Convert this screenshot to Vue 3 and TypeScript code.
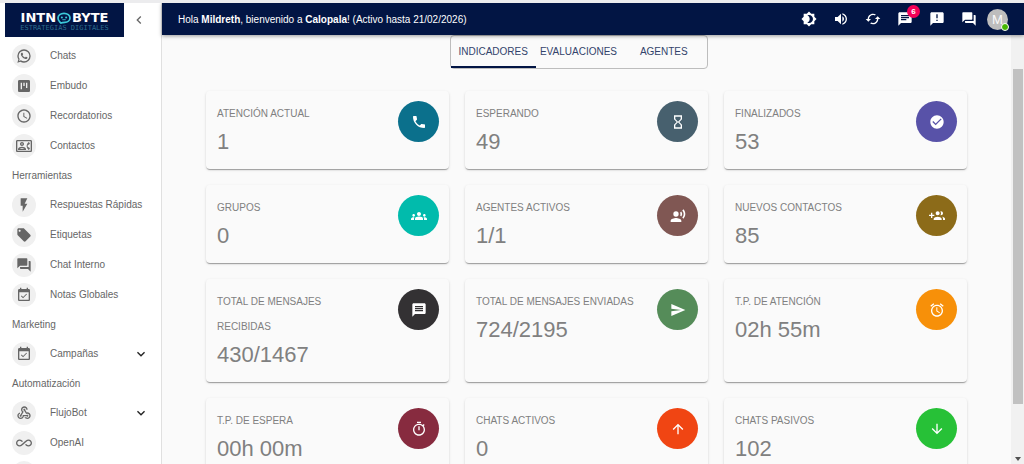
<script setup lang="ts">
import { ref } from 'vue'

interface NavItem {
  label: string
  icon: string
  expandable?: boolean
}
interface NavGroup {
  title?: string
  items: NavItem[]
}
interface Stat {
  label: string
  value: string
  icon: string
  tone: string
}

const bubble = 'M20 2H4c-1.1 0-1.99.9-1.99 2L2 22l4-4h14c1.1 0 2-.9 2-2V4c0-1.1-.9-2-2-2z'

const icons: Record<string, string> = {
  whatsapp:
    'M16.75 13.96c.25.13.41.2.46.3.06.11.04.61-.21 1.18-.2.56-1.24 1.1-1.7 1.12-.46.02-.47.36-2.96-.73-2.49-1.09-3.99-3.75-4.11-3.92-.12-.17-.96-1.38-.92-2.61.05-1.22.69-1.8.95-2.04.24-.26.51-.29.68-.26h.47c.15 0 .36-.06.55.45l.69 1.87c.06.13.1.28.01.44l-.27.41-.39.42c-.12.12-.26.25-.12.5.12.26.62 1.09 1.32 1.78.91.88 1.71 1.17 1.95 1.3.24.14.39.12.54-.04l.81-.94c.19-.25.35-.19.58-.11l1.67.88M12 2a10 10 0 0 1 10 10 10 10 0 0 1-10 10c-1.97 0-3.8-.57-5.35-1.55L2 22l1.55-4.65A9.969 9.969 0 0 1 2 12 10 10 0 0 1 12 2m0 2a8 8 0 0 0-8 8c0 1.72.54 3.31 1.46 4.61L4.5 19.5l2.89-.96A7.95 7.95 0 0 0 12 20a8 8 0 0 0 8-8 8 8 0 0 0-8-8z',
  board:
    'M19 3H5c-1.1 0-2 .9-2 2v14c0 1.1.9 2 2 2h14c1.1 0 2-.9 2-2V5c0-1.1-.9-2-2-2zM9 17H7V7h2v10zm4-5h-2V7h2v5zm4 3h-2V7h2v8z',
  clock:
    'M11.99 2C6.47 2 2 6.48 2 12s4.47 10 9.99 10C17.52 22 22 17.52 22 12S17.52 2 11.99 2zM12 20c-4.42 0-8-3.58-8-8s3.58-8 8-8 8 3.58 8 8-3.58 8-8 8zm.5-13H11v6l5.25 3.15.75-1.23-4.5-2.67z',
  contacts:
    'M22 3H2C.9 3 0 3.9 0 5v14c0 1.1.9 2 2 2h20c1.1 0 1.99-.9 1.99-2L24 5c0-1.1-.9-2-2-2zm0 16H2V5h20v14zM19 17.99L21 16l-1.51-2h-1.64c-.22-.63-.35-1.3-.35-2s.13-1.37.35-2h1.64L21 8l-2.01-2.01c-1.31.98-2.28 2.37-2.73 4.01-.16.64-.26 1.31-.26 2s.1 1.36.26 2c.45 1.65 1.42 3.03 2.74 3.99zM9 12c1.65 0 3-1.35 3-3s-1.35-3-3-3-3 1.35-3 3 1.35 3 3 3zm0-4c.55 0 1 .45 1 1s-.45 1-1 1-1-.45-1-1 .45-1 1-1zm6 8.59c0-2.5-3.97-3.58-6-3.58s-6 1.08-6 3.58V18h12v-1.41zM5.48 16c.74-.5 2.22-1 3.52-1s2.77.49 3.52 1H5.48z',
  flash: 'M7 2v11h3v9l7-12h-4l4-8z',
  tag: 'M21.41 11.58l-9-9C12.05 2.22 11.55 2 11 2H4c-1.1 0-2 .9-2 2v7c0 .55.22 1.05.59 1.42l9 9c.36.36.86.58 1.41.58.55 0 1.05-.22 1.41-.59l7-7c.37-.36.59-.86.59-1.41 0-.55-.23-1.06-.59-1.42zM5.5 7C4.67 7 4 6.33 4 5.5S4.67 4 5.5 4 7 4.67 7 5.5 6.33 7 5.5 7z',
  forum:
    'M21 6h-2v9H6v2c0 .55.45 1 1 1h11l4 4V7c0-.55-.45-1-1-1zm-4 6V3c0-.55-.45-1-1-1H3c-.55 0-1 .45-1 1v14l4-4h10c.55 0 1-.45 1-1z',
  event:
    'M16.53 11.06L15.47 10l-4.88 4.88-2.12-2.12-1.06 1.06L10.59 17l5.94-5.94zM19 3h-1V1h-2v2H8V1H6v2H5c-1.11 0-1.99.9-1.99 2L3 19c0 1.1.89 2 2 2h14c1.1 0 2-.9 2-2V5c0-1.1-.9-2-2-2zm0 16H5V8h14v11z',
  webhook:
    'M10 15h5.88c.27-.31.67-.5 1.12-.5.83 0 1.5.67 1.5 1.5s-.67 1.5-1.5 1.5c-.44 0-.84-.19-1.12-.5H11.9c-.46 2.28-2.48 4-4.9 4-2.76 0-5-2.24-5-5 0-2.42 1.72-4.44 4-4.9v2.07c-1.16.41-2 1.53-2 2.83 0 1.65 1.35 3 3 3s3-1.35 3-3v-1zm2.5-11c1.65 0 3 1.35 3 3h2c0-2.76-2.24-5-5-5s-5 2.24-5 5c0 1.43.6 2.71 1.55 3.62l-2.35 3.9c-.68.14-1.2.75-1.2 1.48 0 .83.67 1.5 1.5 1.5s1.5-.67 1.5-1.5c0-.16-.02-.31-.07-.45l3.38-5.63C10.49 9.61 9.5 8.42 9.5 7c0-1.65 1.35-3 3-3zM17 13c-.64 0-1.23.2-1.72.54l-3.05-5.07C11.53 8.35 11 7.74 11 7c0-.83.67-1.5 1.5-1.5S14 6.17 14 7c0 .15-.02.29-.06.43l2.19 3.65c.28-.05.57-.08.87-.08 2.76 0 5 2.24 5 5s-2.24 5-5 5c-1.85 0-3.47-1.01-4.33-2.5h2.67c.48.32 1.05.5 1.66.5 1.65 0 3-1.35 3-3s-1.35-3-3-3z',
  infinity:
    'M18.6 6.62c-1.44 0-2.8.56-3.77 1.53L12 10.66 10.48 12h.01L7.8 14.39c-.64.64-1.49.99-2.4.99-1.87 0-3.39-1.51-3.39-3.38S3.53 8.62 5.4 8.62c.91 0 1.76.35 2.44 1.03l1.13 1 1.51-1.34L9.22 8.2C8.2 7.18 6.84 6.62 5.4 6.62 2.42 6.62 0 9.04 0 12s2.42 5.38 5.4 5.38c1.44 0 2.8-.56 3.77-1.53l2.83-2.5.01.01L13.52 12h-.01l2.69-2.39c.64-.64 1.49-.99 2.4-.99 1.87 0 3.39 1.51 3.39 3.38s-1.52 3.38-3.39 3.38c-.9 0-1.76-.35-2.44-1.03l-1.14-1.01-1.51 1.34 1.27 1.12c1.02 1.01 2.37 1.57 3.82 1.57 2.98 0 5.4-2.41 5.4-5.38s-2.42-5.37-5.4-5.37z',
  brightness:
    'M20 8.69V4h-4.69L12 .69 8.69 4H4v4.69L.69 12 4 15.31V20h4.69L12 23.31 15.31 20H20v-4.69L23.31 12 20 8.69zM12 18c-.89 0-1.74-.2-2.5-.55C11.56 16.5 13 14.42 13 12s-1.44-4.5-3.5-5.45C10.26 6.2 11.11 6 12 6c3.31 0 6 2.69 6 6s-2.69 6-6 6z',
  volume:
    'M3 9v6h4l5 5V4L7 9H3zm13.5 3c0-1.77-1.02-3.29-2.5-4.03v8.05c1.48-.73 2.5-2.25 2.5-4.02zM14 3.23v2.06c2.89.86 5 3.54 5 6.71s-2.11 5.85-5 6.71v2.06c4.01-.91 7-4.49 7-8.77s-2.99-7.86-7-8.77z',
  sync: 'M19 8l-4 4h3c0 3.31-2.69 6-6 6-1.01 0-1.97-.25-2.8-.7l-1.46 1.46C8.97 19.54 10.43 20 12 20c4.42 0 8-3.58 8-8h3l-4-4zM6 12c0-3.31 2.69-6 6-6 1.01 0 1.97.25 2.8.7l1.46-1.46C15.03 4.46 13.57 4 12 4c-4.42 0-8 3.58-8 8H1l4 4 4-4H6z',
  chat: bubble + 'M6 9h12v2H6V9zm8 5H6v-2h8v2zm4-6H6V6h12v2z',
  message: bubble + 'm-2 12H6v-2h12v2zm0-3H6V9h12v2zm0-3H6V6h12v2z',
  announcement: bubble + 'm-7 9h-2V5h2v6zm0 4h-2v-2h2v2z',
  phone:
    'M6.62 10.79c1.44 2.83 3.76 5.14 6.59 6.59l2.2-2.2c.27-.27.67-.36 1.02-.24 1.12.37 2.33.57 3.57.57.55 0 1 .45 1 1V20c0 .55-.45 1-1 1-9.39 0-17-7.61-17-17 0-.55.45-1 1-1h3.5c.55 0 1 .45 1 1 0 1.25.2 2.45.57 3.57.11.35.03.74-.25 1.02l-2.2 2.2z',
  hourglass:
    'M6 2v6h.01L6 8.01 10 12l-4 4 .01.01H6V22h12v-5.99h-.01L18 16l-4-4 4-3.99-.01-.01H18V2H6zm10 14.5V20H8v-3.5l4-4 4 4zm-4-5l-4-4V4h8v3.5l-4 4z',
  check:
    'M12 2C6.48 2 2 6.48 2 12s4.48 10 10 10 10-4.48 10-10S17.52 2 12 2zm-2 15l-5-5 1.41-1.41L10 14.17l7.59-7.59L19 8l-9 9z',
  groups:
    'M12 12.75c1.63 0 3.07.39 4.24.9 1.08.48 1.76 1.56 1.76 2.73V18H6v-1.61c0-1.18.68-2.26 1.76-2.73 1.17-.52 2.61-.91 4.24-.91zM4 13c1.1 0 2-.9 2-2s-.9-2-2-2-2 .9-2 2 .9 2 2 2zm1.13 1.1c-.37-.06-.74-.1-1.13-.1-.99 0-1.93.21-2.78.58C.48 14.9 0 15.62 0 16.43V18h4.5v-1.61c0-.83.23-1.61.63-2.29zM20 13c1.1 0 2-.9 2-2s-.9-2-2-2-2 .9-2 2 .9 2 2 2zm4 3.43c0-.81-.48-1.53-1.22-1.85-.85-.37-1.79-.58-2.78-.58-.39 0-.76.04-1.13.1.4.68.63 1.46.63 2.29V18H24v-1.57zM12 6c1.66 0 3 1.34 3 3s-1.34 3-3 3-3-1.34-3-3 1.34-3 3-3z',
  voice:
    'M9 5a4 4 0 1 0 0 8 4 4 0 0 0 0-8zM9 15c-2.67 0-8 1.34-8 4v2h16v-2c0-2.66-5.33-4-8-4zm7.76-9.64l-1.68 1.69c.84 1.18.84 2.71 0 3.89l1.68 1.69c2.02-2.02 2.02-5.07 0-7.27zM20.07 2l-1.63 1.63c2.77 3.02 2.77 7.56 0 10.74L20.07 16c3.9-3.89 3.91-9.95 0-14z',
  groupAdd:
    'M8 10H5V7H3v3H0v2h3v3h2v-3h3v-2zm10 1c1.66 0 2.99-1.34 2.99-3S19.66 5 18 5c-.32 0-.63.05-.91.14.57.81.9 1.79.9 2.86s-.34 2.04-.9 2.86c.28.09.59.14.91.14zm-5 0c1.66 0 2.99-1.34 2.99-3S14.66 5 13 5c-1.66 0-3 1.34-3 3s1.34 3 3 3zm6.62 2.16c.83.73 1.38 1.66 1.38 2.84v2h3v-2c0-1.54-2.37-2.49-4.38-2.84zM13 13c-2 0-6 1-6 3v2h12v-2c0-2-4-3-6-3z',
  send: 'M2.01 21L23 12 2.01 3 2 10l15 2-15 2z',
  alarm:
    'M22 5.72l-4.6-3.86-1.29 1.53 4.6 3.86L22 5.72zM7.88 3.39L6.6 1.86 2 5.71l1.29 1.53 4.59-3.85zM12.5 8H11v6l4.75 2.85.75-1.23-4-2.37V8zM12 4c-4.97 0-9 4.03-9 9s4.02 9 9 9c4.97 0 9-4.03 9-9s-4.03-9-9-9zm0 16c-3.87 0-7-3.13-7-7s3.13-7 7-7 7 3.13 7 7-3.13 7-7 7z',
  timer:
    'M15 1H9v2h6V1zm-4 13h2V8h-2v6zm8.03-6.61l1.42-1.42c-.43-.51-.9-.99-1.41-1.41l-1.42 1.42C16.07 4.74 14.12 4 12 4c-4.97 0-9 4.03-9 9s4.02 9 9 9 9-4.03 9-9c0-2.12-.74-4.07-1.97-5.61zM12 20c-3.87 0-7-3.13-7-7s3.13-7 7-7 7 3.13 7 7-3.13 7-7 7z',
  up: 'M4 12l1.41 1.41L11 7.83V20h2V7.83l5.58 5.59L20 12l-8-8-8 8z',
  down: 'M20 12l-1.41-1.41L13 16.17V4h-2v12.17l-5.58-5.59L4 12l8 8 8-8z',
}

const navGroups: NavGroup[] = [
  {
    items: [
      { label: 'Chats', icon: 'whatsapp' },
      { label: 'Embudo', icon: 'board' },
      { label: 'Recordatorios', icon: 'clock' },
      { label: 'Contactos', icon: 'contacts' },
    ],
  },
  {
    title: 'Herramientas',
    items: [
      { label: 'Respuestas Rápidas', icon: 'flash' },
      { label: 'Etiquetas', icon: 'tag' },
      { label: 'Chat Interno', icon: 'forum' },
      { label: 'Notas Globales', icon: 'event' },
    ],
  },
  { title: 'Marketing', items: [{ label: 'Campañas', icon: 'event', expandable: true }] },
  {
    title: 'Automatización',
    items: [
      { label: 'FlujoBot', icon: 'webhook', expandable: true },
      { label: 'OpenAI', icon: 'infinity' },
      { label: '', icon: '' },
    ],
  },
]

const actions = [
  { name: 'Tema', icon: 'brightness', badge: '' },
  { name: 'Volumen', icon: 'volume', badge: '' },
  { name: 'Actualizar', icon: 'sync', badge: '' },
  { name: 'Mensajes', icon: 'chat', badge: '6' },
  { name: 'Avisos', icon: 'announcement', badge: '' },
  { name: 'Chat interno', icon: 'forum', badge: '' },
]

const tabs = ['INDICADORES', 'EVALUACIONES', 'AGENTES']
const activeTab = ref('INDICADORES')

const stats: Stat[] = [
  { label: 'ATENCIÓN ACTUAL', value: '1', icon: 'phone', tone: 'teal' },
  { label: 'ESPERANDO', value: '49', icon: 'hourglass', tone: 'slate' },
  { label: 'FINALIZADOS', value: '53', icon: 'check', tone: 'violet' },
  { label: 'GRUPOS', value: '0', icon: 'groups', tone: 'aqua' },
  { label: 'AGENTES ACTIVOS', value: '1/1', icon: 'voice', tone: 'brown' },
  { label: 'NUEVOS CONTACTOS', value: '85', icon: 'groupAdd', tone: 'gold' },
  { label: 'TOTAL DE MENSAJES\nRECIBIDAS', value: '430/1467', icon: 'message', tone: 'dark' },
  { label: 'TOTAL DE MENSAJES ENVIADAS', value: '724/2195', icon: 'send', tone: 'green' },
  { label: 'T.P. DE ATENCIÓN', value: '02h 55m', icon: 'alarm', tone: 'orange' },
  { label: 'T.P. DE ESPERA', value: '00h 00m', icon: 'timer', tone: 'wine' },
  { label: 'CHATS ACTIVOS', value: '0', icon: 'up', tone: 'red' },
  { label: 'CHATS PASIVOS', value: '102', icon: 'down', tone: 'lime' },
]
</script>

<template>
  <div class="app">
    <aside class="sidebar">
      <div class="brand-row">
        <a class="brand" href="#" aria-label="Intnobyte">
          <span class="brand-name">
            <span>INTN</span>
            <svg class="brand-mark" viewBox="0 0 16 14" aria-hidden="true">
              <path d="M3 11.500C1.500 10 1 8.500 1 7c0-3 3-5.500 7-5.500S15 4 15 7s-3 5-6 5c-1.500 0-3 0-4.500 1z" fill="none" stroke="#3cc8d8" stroke-width="2" />
              <circle cx="5.500" cy="6.500" r="1.200" fill="#3cc8d8" />
              <circle cx="10.500" cy="6.500" r="1.200" fill="#3cc8d8" />
              <path d="M6 9h4" stroke="#3cc8d8" />
            </svg>
            <span>BYTE</span>
          </span>
          <span class="brand-tag">ESTRATEGIAS DIGITALES</span>
        </a>
        <button class="collapse" type="button" aria-label="Contraer menú">
          <svg class="icon" viewBox="0 0 24 24"><path d="M15.410 7.410L14 6l-6 6 6 6 1.410-1.410L10.830 12z" /></svg>
        </button>
      </div>
      <nav>
        <template v-for="(group, g) in navGroups" :key="g">
          <h2 v-if="group.title" class="nav-title">{{ group.title }}</h2>
          <a v-for="item in group.items" :key="item.label" class="nav-item" href="#">
            <span class="nav-icon">
              <svg v-if="item.icon" class="icon" viewBox="0 0 24 24"><path :d="icons[item.icon]" /></svg>
            </span>
            <span class="nav-label">{{ item.label }}</span>
            <svg v-if="item.expandable" class="icon caret" viewBox="0 0 24 24">
              <path d="M16.590 8.590L12 13.170 7.410 8.590 6 10l6 6 6-6z" />
            </svg>
          </a>
        </template>
      </nav>
    </aside>

    <div class="content">
      <header class="topbar">
        <p class="greeting">
          Hola <b>Mildreth</b>, bienvenido a <b>Calopala</b>! (Activo hasta 21/02/2026)
        </p>
        <button v-for="a in actions" :key="a.name" class="action" type="button" :aria-label="a.name">
          <svg class="icon" viewBox="0 0 24 24"><path :d="icons[a.icon]" /></svg>
          <span v-if="a.badge" class="badge">{{ a.badge }}</span>
        </button>
        <button class="avatar" type="button" aria-label="Cuenta">M<span class="online"></span></button>
      </header>

      <div class="body">
        <main class="main">
          <div class="tab-row">
            <div class="tabs" role="tablist">
              <button
                v-for="t in tabs"
                :key="t"
                class="tab"
                :class="{ active: t === activeTab }"
                type="button"
                role="tab"
                :aria-selected="t === activeTab"
                @click="activeTab = t"
              >
                {{ t }}
              </button>
            </div>
          </div>
          <section class="cards">
            <article v-for="s in stats" :key="s.label" class="card">
              <div class="card-text">
                <h3 class="card-label">{{ s.label }}</h3>
                <p class="card-value">{{ s.value }}</p>
              </div>
              <span class="disc" :class="s.tone">
                <svg class="icon" viewBox="0 0 24 24"><path :d="icons[s.icon]" /></svg>
              </span>
            </article>
          </section>
        </main>
        <div class="scroll" aria-hidden="true">
          <span class="thumb"></span>
          <span class="rest"></span>
          <svg class="scroll-arrow" viewBox="0 0 10 10"><path d="M2 3h6L5 7z" /></svg>
        </div>
      </div>
    </div>
  </div>
</template>

<style>
body {
  background: #fafafa;
}
</style>

<style scoped>
.app {
  display: flex;
  height: 100vh;
  box-sizing: border-box;
  overflow: hidden;
  border-top: 3px solid #ececee;
  font-family: 'Liberation Sans', Arial, sans-serif;
  font-size: 10px;
  color: #666;
  background: #fafafa;
}
button {
  padding: 0;
  border: 0;
  background: none;
  font: inherit;
  color: inherit;
  cursor: pointer;
}
a {
  color: inherit;
  text-decoration: none;
}
h2,
h3,
p {
  margin: 0;
  font-weight: 400;
}
.icon {
  display: block;
  flex: none;
  width: 16px;
  height: 16px;
  fill: currentColor;
}

.sidebar {
  flex: none;
  width: 161px;
  overflow: hidden;
  border-right: 1px solid #e0e0e0;
  background: #fff;
}
.brand-row {
  display: flex;
  align-items: center;
  gap: 7px;
  height: 34px;
  margin-bottom: 4px;
  padding-left: 5px;
}
.brand {
  display: flex;
  flex-direction: column;
  align-items: center;
  justify-content: center;
  width: 119px;
  height: 34px;
  box-sizing: border-box;
  padding-top: 3px;
  color: #fff;
  background: #021544;
}
.brand-name {
  display: flex;
  align-items: center;
  font-family: 'DejaVu Sans', sans-serif;
  font-size: 13px;
  font-weight: 700;
  line-height: 12px;
}
.brand-mark {
  width: 16px;
  height: 12px;
}
.brand-tag {
  font-family: 'DejaVu Sans Mono', monospace;
  font-size: 7px;
  line-height: 8px;
  color: #2b6c8c;
}
.nav-title {
  padding-left: 12px;
  font-size: 10px;
  line-height: 29px;
}
.nav-item {
  display: flex;
  align-items: center;
  height: 30px;
  padding: 0 12px;
}
.nav-icon {
  display: flex;
  align-items: center;
  justify-content: center;
  width: 24px;
  height: 24px;
  border-radius: 50%;
  background: #f0f0f0;
}
.nav-label {
  flex: 1;
  padding: 0 0 2px 14px;
}
.caret {
  color: #222;
}

.content {
  display: flex;
  flex: 1;
  flex-direction: column;
  min-width: 0;
}
.topbar {
  z-index: 1;
  display: flex;
  flex: none;
  align-items: center;
  height: 32px;
  padding: 0 16px;
  color: #fff;
  background: #021544;
  box-shadow: 0 1px 4px rgba(0, 0, 0, 0.4);
}
.greeting {
  flex: 1;
}
.action {
  position: relative;
  display: flex;
  align-items: center;
  justify-content: center;
  width: 32px;
  height: 32px;
}
.badge {
  position: absolute;
  top: 2px;
  right: 1px;
  width: 13px;
  height: 13px;
  border-radius: 50%;
  font-size: 8px;
  font-weight: 700;
  line-height: 13px;
  text-align: center;
  background: #f50057;
}
.avatar {
  position: relative;
  width: 21px;
  height: 21px;
  margin-left: 2px;
  border-radius: 50%;
  font-size: 13px;
  line-height: 21px;
  color: #fafafa;
  background: #bdbdbd;
}
.online {
  position: absolute;
  right: -1px;
  bottom: -1px;
  width: 6px;
  height: 6px;
  border: 1px solid #fff;
  border-radius: 50%;
  background: #44b700;
}

.body {
  display: flex;
  flex: 1;
  min-height: 0;
}
.main {
  flex: 1;
  min-width: 0;
  padding: 0 44px;
  overflow: hidden;
}
.tab-row {
  display: flex;
  justify-content: center;
  margin-bottom: 22px;
  padding-right: 16px;
}
.tabs {
  display: flex;
  width: 256px;
  height: 32px;
  border: 1px solid #bdbdbd;
  border-radius: 4px;
}
.tab {
  flex: 1;
  border-bottom: 2px solid transparent;
  color: #33436b;
}
.tab.active {
  border-color: #021544;
}
.cards {
  display: grid;
  grid-template-columns: repeat(3, 1fr);
  gap: 16px;
}
.card {
  display: flex;
  align-items: flex-start;
  justify-content: space-between;
  padding: 10px 10px 11px 11px;
  border-radius: 4px;
  color: #808080;
  box-shadow:
    0 2px 1px -1px rgba(0, 0, 0, 0.2),
    0 1px 1px rgba(0, 0, 0, 0.14),
    0 1px 3px rgba(0, 0, 0, 0.12);
}
.card-label {
  font-size: 10px;
  line-height: 25px;
  white-space: pre-line;
}
.card-value {
  font-size: 22px;
  line-height: 32px;
}
.disc {
  display: flex;
  flex: none;
  align-items: center;
  justify-content: center;
  width: 41px;
  height: 41px;
  border-radius: 50%;
  color: #fff;
}
.teal { background: #0b708c; }
.slate { background: #47606e; }
.violet { background: #5852a8; }
.aqua { background: #01bbac; }
.brown { background: #805753; }
.gold { background: #8c6b19; }
.dark { background: #333133; }
.green { background: #558c59; }
.orange { background: #f79009; }
.wine { background: #872b3f; }
.red { background: #f04513; }
.lime { background: #27c137; }

.scroll {
  display: flex;
  flex: none;
  flex-direction: column;
  align-items: center;
  width: 13px;
  box-sizing: border-box;
  padding-top: 34px;
  background: #f1f1f1;
}
.thumb {
  flex: 333;
  width: 10px;
  background: #c1c1c1;
}
.rest {
  flex: 50;
}
.scroll-arrow {
  width: 10px;
  height: 10px;
  fill: #505050;
}
</style>
